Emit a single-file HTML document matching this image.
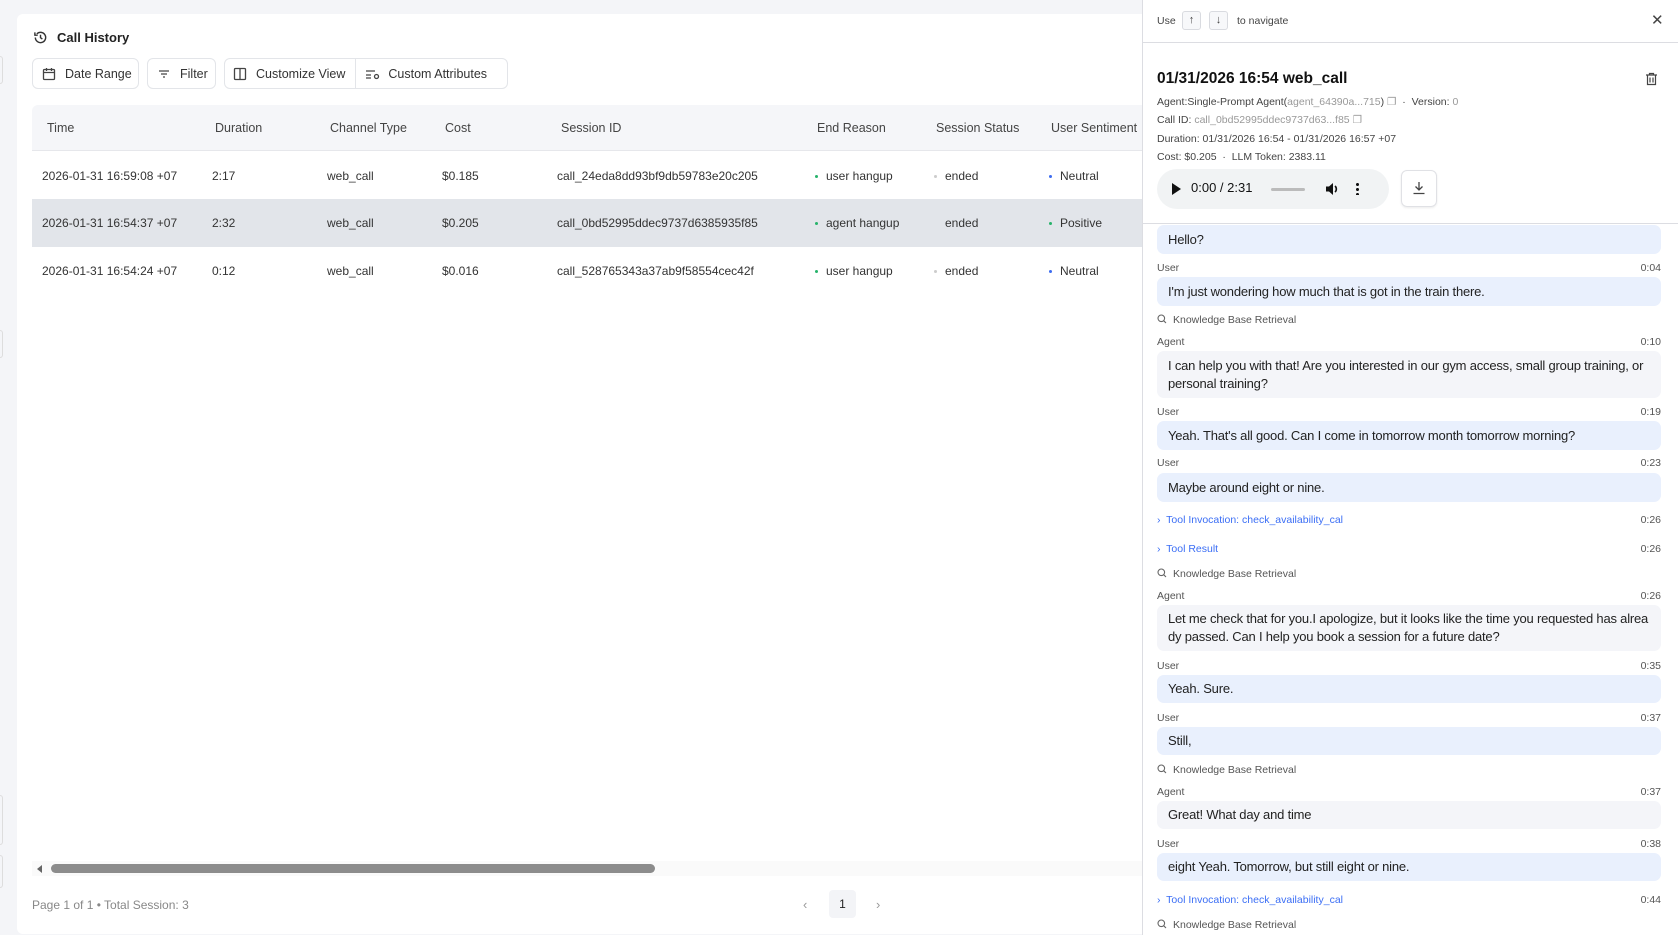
<!DOCTYPE html>
<html><head><meta charset="utf-8"><style>
*{box-sizing:border-box;margin:0;padding:0}
body{width:1678px;height:935px;overflow:hidden;background:#f4f5f8;font-family:"Liberation Sans",sans-serif;color:#1f2329;position:relative}
.a{position:absolute;white-space:nowrap}
.card{position:absolute;left:17px;top:14px;width:1200px;height:920px;background:#fff;border-radius:6px}
.btn{position:absolute;top:58px;height:31px;border:1px solid #e3e5e9;border-radius:6px;background:#fff;font-size:12.5px;color:#333;display:flex;align-items:center;padding-left:9px;gap:9px}
.hd{font-size:12.5px;color:#444;top:121px}
.cell{font-size:12px;color:#333}
.dot{position:absolute;width:3px;height:3px;border-radius:50%}
.panel{position:absolute;left:1142px;top:0;width:536px;height:935px;background:#fff;border-left:1px solid #dcdde2}
.sm{font-size:10.5px;color:#444}
.bub{position:absolute;left:14px;width:504px;border-radius:7px;font-size:13px;letter-spacing:-0.2px;color:#222;padding:0 11px;display:flex;align-items:center;line-height:18px}
.u{background:#e9f0fd}.g{background:#f4f5f9}
.lab{position:absolute;left:14px;width:504px;font-size:10.5px;color:#555;display:flex;justify-content:space-between;align-items:center}
.tool{color:#3b6ef5}
.key{position:absolute;top:11px;width:19px;height:19px;border:1px solid #d9dbe0;border-radius:3px;background:#f7f8fa;font-size:11px;text-align:center;line-height:17px;color:#444}
.mg{display:inline-block;vertical-align:-1px;margin-right:6px}
</style></head><body>
<div style="position:absolute;left:0;top:56px;width:3px;height:28px;border:1px solid #ddd;border-left:none;border-radius:0 4px 4px 0"></div>
<div style="position:absolute;left:0;top:330px;width:3px;height:28px;border:1px solid #ddd;border-left:none;border-radius:0 4px 4px 0"></div>
<div style="position:absolute;left:0;top:795px;width:3px;height:50px;border:1px solid #ddd;border-left:none;border-radius:0 4px 4px 0"></div>
<div style="position:absolute;left:0;top:855px;width:3px;height:33px;border:1px solid #ddd;border-left:none;border-radius:0 4px 4px 0"></div>
<div class="card"></div>
<svg class="a" style="left:33px;top:30px" width="15" height="15" viewBox="0 0 16 16" fill="none" stroke="#333" stroke-width="1.5"><path d="M2.5 8a5.5 5.5 0 1 0 1.6-3.9"/><path d="M2 2.5v3h3"/><path d="M8 5v3.2l2 1.5"/></svg>
<div class="a" style="left:57px;top:30px;font-size:13px;font-weight:bold;color:#222">Call History</div>
<div class="btn" style="left:32px;width:107px"><svg width="14" height="14" viewBox="0 0 14 14" fill="none" stroke="#444" stroke-width="1.3"><rect x="1.5" y="2.5" width="11" height="10" rx="1"/><path d="M1.5 5.5h11M4.5 1v3M9.5 1v3"/></svg>Date Range</div>
<div class="btn" style="left:147px;width:69px"><svg width="14" height="14" viewBox="0 0 14 14" stroke="#444" stroke-width="1.3"><path d="M2 4h10M4 7h6M6 10h2"/></svg>Filter</div>
<div class="btn" style="left:224px;width:284px;padding-left:8px"><svg width="14" height="14" viewBox="0 0 14 14" fill="none" stroke="#444" stroke-width="1.3"><rect x="1.5" y="1.5" width="11" height="11" rx="1"/><path d="M7 1.5v11"/></svg>Customize View<span style="width:1px;height:29px;background:#e3e5e9;margin-left:1px"></span><svg width="16" height="14" viewBox="0 0 16 14" fill="none" stroke="#444" stroke-width="1.3"><path d="M1 4h9M1 8h5M1 11h5"/><circle cx="11.5" cy="9.5" r="2"/></svg><span style="margin-left:-2px">Custom Attributes</span></div>
<div class="a" style="left:32px;top:105px;width:1110px;height:46px;background:#f5f6f9;border-bottom:1px solid #e6e7eb;border-radius:6px 0 0 0"></div>
<div class="a hd" style="left:47px">Time</div><div class="a hd" style="left:215px">Duration</div><div class="a hd" style="left:330px">Channel Type</div><div class="a hd" style="left:445px">Cost</div><div class="a hd" style="left:561px">Session ID</div><div class="a hd" style="left:817px">End Reason</div><div class="a hd" style="left:936px">Session Status</div><div class="a hd" style="left:1051px">User Sentiment</div>
<div class="a" style="left:32px;top:199px;width:1110px;height:48px;background:#e2e5ea"></div>
<div class="a cell" style="left:42px;top:169px">2026-01-31 16:59:08 +07</div><div class="a cell" style="left:212px;top:169px">2:17</div><div class="a cell" style="left:327px;top:169px">web_call</div><div class="a cell" style="left:442px;top:169px">$0.185</div><div class="a cell" style="left:557px;top:169px">call_24eda8dd93bf9db59783e20c205</div><div class="dot" style="left:815px;top:175px;background:#27b36b"></div><div class="a cell" style="left:826px;top:169px">user hangup</div><div class="dot" style="left:934px;top:175px;background:#ccc"></div><div class="a cell" style="left:945px;top:169px">ended</div><div class="dot" style="left:1049px;top:175px;background:#3d6cf0"></div><div class="a cell" style="left:1060px;top:169px">Neutral</div>
<div class="a cell" style="left:42px;top:216px">2026-01-31 16:54:37 +07</div><div class="a cell" style="left:212px;top:216px">2:32</div><div class="a cell" style="left:327px;top:216px">web_call</div><div class="a cell" style="left:442px;top:216px">$0.205</div><div class="a cell" style="left:557px;top:216px">call_0bd52995ddec9737d6385935f85</div><div class="dot" style="left:815px;top:222px;background:#27b36b"></div><div class="a cell" style="left:826px;top:216px">agent hangup</div><div class="a cell" style="left:945px;top:216px">ended</div><div class="dot" style="left:1049px;top:222px;background:#27b36b"></div><div class="a cell" style="left:1060px;top:216px">Positive</div>
<div class="a cell" style="left:42px;top:264px">2026-01-31 16:54:24 +07</div><div class="a cell" style="left:212px;top:264px">0:12</div><div class="a cell" style="left:327px;top:264px">web_call</div><div class="a cell" style="left:442px;top:264px">$0.016</div><div class="a cell" style="left:557px;top:264px">call_528765343a37ab9f58554cec42f</div><div class="dot" style="left:815px;top:270px;background:#27b36b"></div><div class="a cell" style="left:826px;top:264px">user hangup</div><div class="dot" style="left:934px;top:270px;background:#ccc"></div><div class="a cell" style="left:945px;top:264px">ended</div><div class="dot" style="left:1049px;top:270px;background:#3d6cf0"></div><div class="a cell" style="left:1060px;top:264px">Neutral</div>
<div class="a" style="left:32px;top:861px;width:1110px;height:15px;background:#fafafa"></div>
<div class="a" style="left:37px;top:865px;width:0;height:0;border-top:4px solid transparent;border-bottom:4px solid transparent;border-right:5px solid #666"></div>
<div class="a" style="left:51px;top:864px;width:604px;height:9px;border-radius:5px;background:#8c8c8c"></div>
<div class="a" style="left:32px;top:898px;font-size:12px;color:#888">Page 1 of 1 • Total Session: 3</div>
<div class="a" style="left:803px;top:897px;font-size:13px;color:#999">‹</div>
<div class="a" style="left:829px;top:890px;width:27px;height:28px;background:#f3f4f7;border-radius:4px;font-size:12px;text-align:center;line-height:28px;color:#222">1</div>
<div class="a" style="left:876px;top:897px;font-size:13px;color:#999">›</div>

<div class="panel">
<div class="a sm" style="left:14px;top:15px">Use</div>
<div class="key" style="left:39px">↑</div><div class="key" style="left:66px">↓</div>
<div class="a sm" style="left:94px;top:15px">to navigate</div>
<div class="a" style="left:508px;top:11px;font-size:15px;color:#444">✕</div>
<div class="a" style="left:0;top:42px;width:536px;height:1px;background:#dcdde2"></div>
<div class="a" style="left:14px;top:70px;font-size:15.5px;font-weight:bold;color:#111">01/31/2026 16:54 web_call</div>
<svg class="a" style="left:502px;top:72px" width="13" height="14" viewBox="0 0 13 14" fill="none" stroke="#444" stroke-width="1.2"><path d="M1 3h11M4.5 3V1.5h4V3M2.5 3v9.5h8V3M5 5.5v5M8 5.5v5"/></svg>
<div class="a sm" style="left:14px;top:96px">Agent:Single-Prompt Agent(<span style="color:#999">agent_64390a...715</span>) <span style="color:#999">❐</span> &nbsp;· &nbsp;Version: <span style="color:#999">0</span></div>
<div class="a sm" style="left:14px;top:114px">Call ID: <span style="color:#999">call_0bd52995ddec9737d63...f85</span> <span style="color:#999">❐</span></div>
<div class="a sm" style="left:14px;top:133px">Duration: 01/31/2026 16:54 - 01/31/2026 16:57 +07</div>
<div class="a sm" style="left:14px;top:151px">Cost: $0.205 &nbsp;· &nbsp;LLM Token: 2383.11</div>
<div class="a" style="left:14px;top:169px;width:232px;height:40px;border-radius:20px;background:#f1f3f4"></div>
<div class="a" style="left:29px;top:183px;width:0;height:0;border-top:6px solid transparent;border-bottom:6px solid transparent;border-left:9px solid #111"></div>
<div class="a" style="left:48px;top:180px;font-size:13px;color:#111">0:00 / 2:31</div>
<div class="a" style="left:128px;top:188px;width:34px;height:3px;background:#bbb;border-radius:2px"></div>
<svg class="a" style="left:182px;top:182px" width="15" height="14" viewBox="0 0 15 14"><path d="M1 4.5h3l4-3.5v12l-4-3.5H1z" fill="#111"/><path d="M10 4a4 4 0 0 1 0 6" stroke="#111" stroke-width="1.6" fill="none"/></svg>
<div class="a" style="left:213px;top:182px;width:3px;height:13px;background:radial-gradient(circle,#111 1.4px,transparent 1.6px) 0 0/3px 5px"></div>
<div class="a" style="left:258px;top:170px;width:36px;height:37px;border:1px solid #e0e1e5;border-radius:6px;box-shadow:0 1px 2px rgba(0,0,0,.08)"></div>
<svg class="a" style="left:269px;top:181px" width="14" height="14" viewBox="0 0 14 14" fill="none" stroke="#444" stroke-width="1.3"><path d="M7 1v8M3.5 5.5L7 9l3.5-3.5M1.5 12.5h11"/></svg>
<div class="a" style="left:0;top:223px;width:536px;height:1px;background:#dcdde2"></div>

<div class="bub u" style="top:225px;height:29px">Hello?</div>
<div class="lab" style="top:262px"><span>User</span><span>0:04</span></div>
<div class="bub u" style="top:277px;height:29px">I'm just wondering how much that is got in the train there.</div>
<div class="lab" style="top:314px"><span><svg class="mg" width="10" height="10" viewBox="0 0 10 10" fill="none" stroke="#666" stroke-width="1.1"><circle cx="4.3" cy="4.3" r="3.3"/><path d="M6.8 6.8L9 9"/></svg>Knowledge Base Retrieval</span></div>
<div class="lab" style="top:336px"><span>Agent</span><span>0:10</span></div>
<div class="bub g" style="top:351px;height:47px;white-space:normal">I can help you with that! Are you interested in our gym access, small group training, or personal training?</div>
<div class="lab" style="top:406px"><span>User</span><span>0:19</span></div>
<div class="bub u" style="top:421px;height:29px">Yeah. That's all good. Can I come in tomorrow month tomorrow morning?</div>
<div class="lab" style="top:457px"><span>User</span><span>0:23</span></div>
<div class="bub u" style="top:473px;height:29px">Maybe around eight or nine.</div>
<div class="lab" style="top:514px"><span class="tool">›&nbsp; Tool Invocation: check_availability_cal</span><span>0:26</span></div>
<div class="lab" style="top:543px"><span class="tool">›&nbsp; Tool Result</span><span>0:26</span></div>
<div class="lab" style="top:568px"><span><svg class="mg" width="10" height="10" viewBox="0 0 10 10" fill="none" stroke="#666" stroke-width="1.1"><circle cx="4.3" cy="4.3" r="3.3"/><path d="M6.8 6.8L9 9"/></svg>Knowledge Base Retrieval</span></div>
<div class="lab" style="top:590px"><span>Agent</span><span>0:26</span></div>
<div class="bub g" style="top:605px;height:46px;white-space:normal;word-break:break-all">Let me check that for you.I apologize, but it looks like the time you requested has already passed. Can I help you book a session for a future date?</div>
<div class="lab" style="top:660px"><span>User</span><span>0:35</span></div>
<div class="bub u" style="top:675px;height:28px">Yeah. Sure.</div>
<div class="lab" style="top:712px"><span>User</span><span>0:37</span></div>
<div class="bub u" style="top:727px;height:28px">Still,</div>
<div class="lab" style="top:764px"><span><svg class="mg" width="10" height="10" viewBox="0 0 10 10" fill="none" stroke="#666" stroke-width="1.1"><circle cx="4.3" cy="4.3" r="3.3"/><path d="M6.8 6.8L9 9"/></svg>Knowledge Base Retrieval</span></div>
<div class="lab" style="top:786px"><span>Agent</span><span>0:37</span></div>
<div class="bub g" style="top:801px;height:28px">Great! What day and time</div>
<div class="lab" style="top:838px"><span>User</span><span>0:38</span></div>
<div class="bub u" style="top:853px;height:28px">eight Yeah. Tomorrow, but still eight or nine.</div>
<div class="lab" style="top:894px"><span class="tool">›&nbsp; Tool Invocation: check_availability_cal</span><span>0:44</span></div>
<div class="lab" style="top:919px"><span><svg class="mg" width="10" height="10" viewBox="0 0 10 10" fill="none" stroke="#666" stroke-width="1.1"><circle cx="4.3" cy="4.3" r="3.3"/><path d="M6.8 6.8L9 9"/></svg>Knowledge Base Retrieval</span></div>
</div>
</body></html>
